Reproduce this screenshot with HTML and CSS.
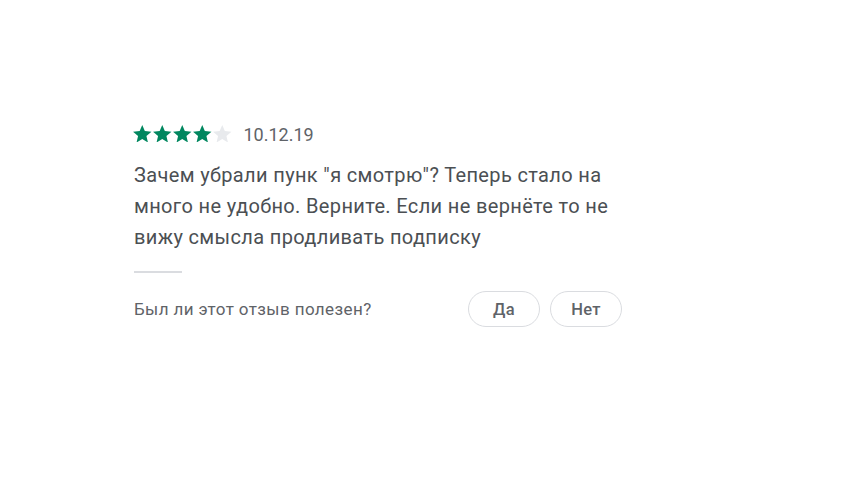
FILE: index.html
```html
<!DOCTYPE html>
<html lang="ru">
<head>
  <meta charset="UTF-8">
  <meta name="viewport" content="width=device-width, initial-scale=1.0">
  <title>Отзыв</title>
  <link rel="stylesheet" href="styles.css">
</head>
<body>
  <div class="review">
    <div class="review-head">
      <div class="stars">
        <svg class="star on" viewBox="2 2 20 19"><path d="M12 17.27L18.18 21l-1.64-7.03L22 9.24l-7.19-.61L12 2 9.19 8.63 2 9.24l5.46 4.73L5.82 21z"/></svg>
        <svg class="star on" viewBox="2 2 20 19"><path d="M12 17.27L18.18 21l-1.64-7.03L22 9.24l-7.19-.61L12 2 9.19 8.63 2 9.24l5.46 4.73L5.82 21z"/></svg>
        <svg class="star on" viewBox="2 2 20 19"><path d="M12 17.27L18.18 21l-1.64-7.03L22 9.24l-7.19-.61L12 2 9.19 8.63 2 9.24l5.46 4.73L5.82 21z"/></svg>
        <svg class="star on" viewBox="2 2 20 19"><path d="M12 17.27L18.18 21l-1.64-7.03L22 9.24l-7.19-.61L12 2 9.19 8.63 2 9.24l5.46 4.73L5.82 21z"/></svg>
        <svg class="star" viewBox="2 2 20 19"><path d="M12 17.27L18.18 21l-1.64-7.03L22 9.24l-7.19-.61L12 2 9.19 8.63 2 9.24l5.46 4.73L5.82 21z"/></svg>
      </div>
      <span class="date">10.12.19</span>
    </div>

    <p class="review-text">Зачем убрали пунк "я смотрю"? Теперь стало на много не удобно. Верните. Если не вернёте то не вижу смысла продливать подписку</p>

    <div class="divider"></div>

    <div class="helpful">
      <span class="question">Был ли этот отзыв полезен?</span>
      <div class="buttons">
        <button type="button" class="vote">Да</button>
        <button type="button" class="vote">Нет</button>
      </div>
    </div>
  </div>
</body>
</html>
```

FILE: styles.css
```css
body {
  font-family: Roboto, "Noto Sans", Arial, sans-serif;
  background: #fff;
  margin: 0;
  padding: 0;
}
.review {
  width: 489px;
  padding: 122px 0 0 133px;
  color: #5f6368;
}
.review-head {
  display: flex;
  align-items: center;
  gap: 12px;
}
.stars {
  display: flex;
  gap: 1.5px;
}
.star {
  width: 18.5px;
  height: 17.5px;
  fill: #e8eaed;
}
.star.on {
  fill: #01875f;
}
.date {
  font-size: 18px;
  color: #5f6368;
  padding-top: 2px;
}
.review-text {
  margin: 15px 0 0 1px;
  font-size: 20px;
  letter-spacing: 0.36px;
  line-height: 31px;
  color: #4b4f53;
}
.divider {
  width: 48px;
  height: 2px;
  margin: 18px 0 0 1px;
  background: #dadce0;
}
.helpful {
  display: flex;
  align-items: center;
  justify-content: space-between;
  margin: 18px 0 0 1px;
}
.question {
  font-size: 17px;
  letter-spacing: 0.4px;
  color: #5f6368;
}
.buttons {
  display: flex;
  gap: 10px;
}
.vote {
  width: 72px;
  height: 36px;
  border: 1px solid #dadce0;
  border-radius: 18px;
  background: #fff;
  font-family: inherit;
  font-size: 16.5px;
  letter-spacing: 0.3px;
  font-weight: 500;
  color: #5f6368;
  cursor: pointer;
}
```
